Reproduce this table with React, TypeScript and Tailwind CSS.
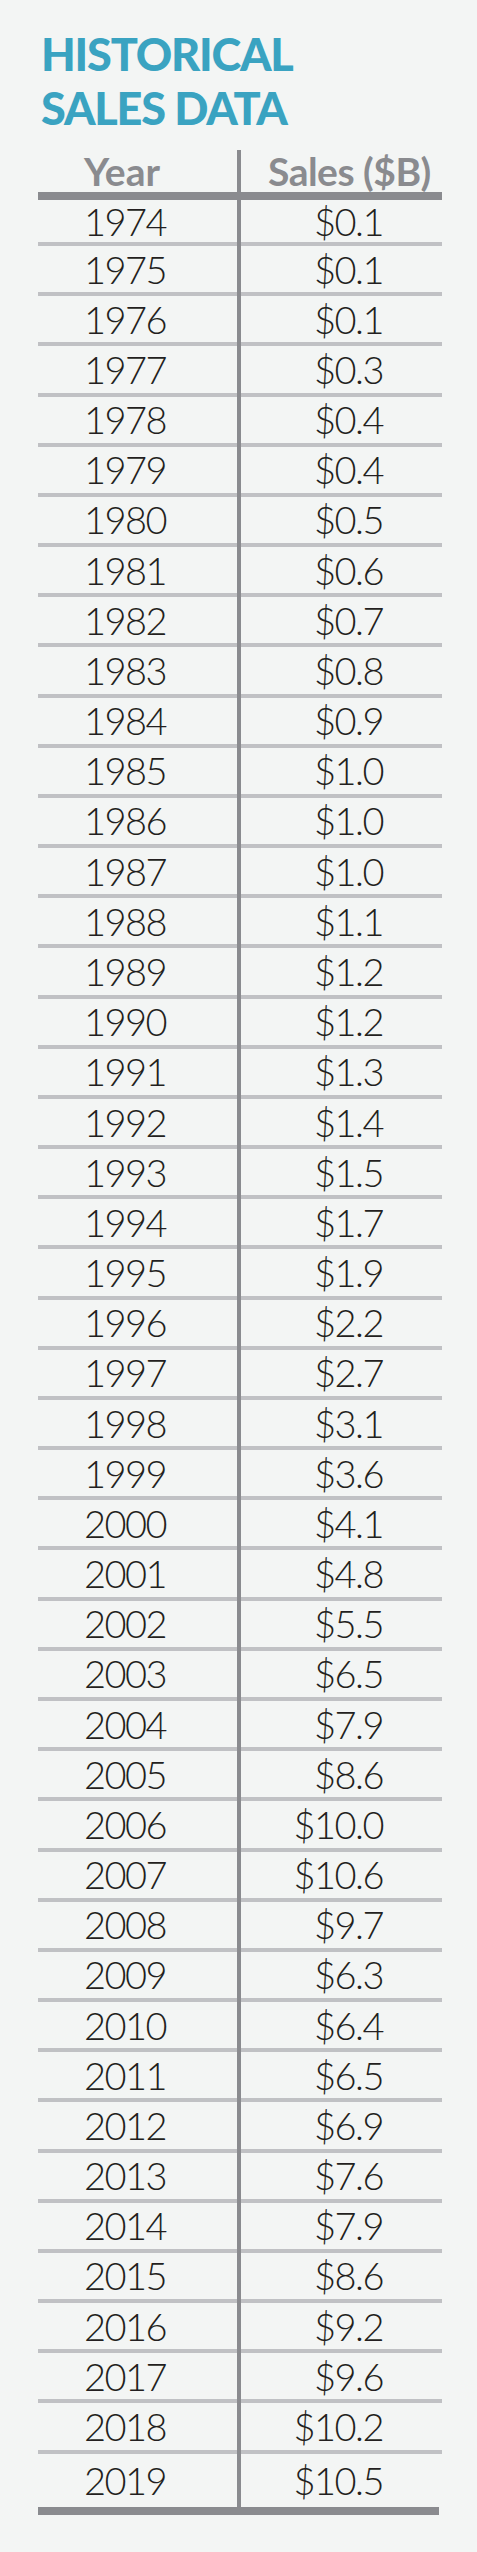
const rows: [string, string][] = [
  ['1974', '$0.1'],
  ['1975', '$0.1'],
  ['1976', '$0.1'],
  ['1977', '$0.3'],
  ['1978', '$0.4'],
  ['1979', '$0.4'],
  ['1980', '$0.5'],
  ['1981', '$0.6'],
  ['1982', '$0.7'],
  ['1983', '$0.8'],
  ['1984', '$0.9'],
  ['1985', '$1.0'],
  ['1986', '$1.0'],
  ['1987', '$1.0'],
  ['1988', '$1.1'],
  ['1989', '$1.2'],
  ['1990', '$1.2'],
  ['1991', '$1.3'],
  ['1992', '$1.4'],
  ['1993', '$1.5'],
  ['1994', '$1.7'],
  ['1995', '$1.9'],
  ['1996', '$2.2'],
  ['1997', '$2.7'],
  ['1998', '$3.1'],
  ['1999', '$3.6'],
  ['2000', '$4.1'],
  ['2001', '$4.8'],
  ['2002', '$5.5'],
  ['2003', '$6.5'],
  ['2004', '$7.9'],
  ['2005', '$8.6'],
  ['2006', '$10.0'],
  ['2007', '$10.6'],
  ['2008', '$9.7'],
  ['2009', '$6.3'],
  ['2010', '$6.4'],
  ['2011', '$6.5'],
  ['2012', '$6.9'],
  ['2013', '$7.6'],
  ['2014', '$7.9'],
  ['2015', '$8.6'],
  ['2016', '$9.2'],
  ['2017', '$9.6'],
  ['2018', '$10.2'],
  ['2019', '$10.5'],
]

const rowClass = (i: number) => {
  if (i === 0) return 'h-[46px] border-b-4'
  if (i === rows.length - 1) return 'h-[53px]'
  return 'h-[50.18px] border-b-4'
}

export default function App() {
  return (
    <div className="min-h-screen bg-[#f3f5f4] pt-[27px] pb-[38px] font-['Lato',sans-serif]">
      <h1 className="pl-[41px] text-[45px] leading-[54px] font-black tracking-[-1.2px] text-[#3aa3c1]">
        HISTORICAL
        <br />
        SALES DATA
      </h1>

      <div className="mt-[15px] ml-[38px] w-[404px]">
        <div className="flex">
          {/* year column */}
          <div className="flex w-[199px] flex-col">
            <div className="flex h-[50px] items-center border-b-8 border-[#8a8b8f] pl-[46px] text-[39px] font-bold text-[#8a8b8f]">
              Year
            </div>
            {rows.map(([year], i) => (
              <div
                key={year}
                className={`flex items-center border-[#c0c1c4] pl-[46px] text-[38px] font-light tracking-[-1.5px] text-[#231f20] ${rowClass(i)}`}
              >
                {year}
              </div>
            ))}
          </div>

          <div className="w-1 bg-[#8a8b8f]" />

          {/* sales column */}
          <div className="flex flex-1 flex-col">
            <div className="flex h-[50px] items-center border-b-8 border-[#8a8b8f] pl-[27px] text-[39px] font-bold tracking-[-0.5px] whitespace-nowrap text-[#8a8b8f]">
              Sales ($B)
            </div>
            {rows.map(([year, sales], i) => (
              <div
                key={year}
                className={`flex items-center justify-end border-[#c0c1c4] pr-[59px] text-[38px] font-light tracking-[-1.5px] text-[#231f20] ${rowClass(i)}`}
              >
                {sales}
              </div>
            ))}
          </div>
        </div>
        <div className="h-2 w-[401px] bg-[#8a8b8f]" />
      </div>
    </div>
  )
}
